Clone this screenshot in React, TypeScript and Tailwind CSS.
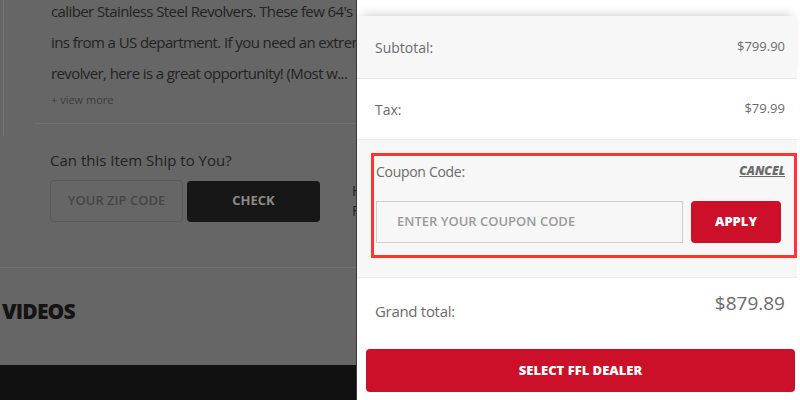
const font = { fontFamily: '"Open Sans", "Liberation Sans", sans-serif' };

function SummaryRow({
  label,
  value,
  className,
}: {
  label: string;
  value: string;
  className: string;
}) {
  return (
    <div
      className={`flex items-center justify-between pl-[18px] pr-[12px] ${className}`}
    >
      <span className="text-[14px] text-[#6b6b6b]">{label}</span>
      <span className="text-[13px] text-[#6b6b6b]">{value}</span>
    </div>
  );
}

export default function App() {
  return (
    <div className="flex h-[400px] w-[800px] overflow-hidden" style={font}>
      {/* dimmed product page */}
      <div className="flex w-[356px] shrink-0 flex-col overflow-hidden bg-[#666666]">
        <div className="ml-[3px] h-[136px] shrink-0 border-l border-[#767676] pl-[31px]">
          <div className="h-[128px] border-b border-[#707070] pl-[16px]">
            <div className="-mt-[4px] whitespace-nowrap text-[15px] leading-[31px] tracking-[-0.6px] text-[#232323]">
              <p>caliber Stainless Steel Revolvers. These few 64's are</p>
              <p>ins from a US department. If you need an extremely</p>
              <p>revolver, here is a great opportunity! (Most w...</p>
            </div>
            <p className="mt-[3px] text-[11px] text-[#3c3c3c]">+ view more</p>
          </div>
        </div>

        <div className="h-[132px] shrink-0 border-b border-[#707070] pl-[50px] pt-[14px]">
          <p className="text-[15px] leading-[20px] text-[#222222]">
            Can this Item Ship to You?
          </p>
          <div className="mt-[10px] flex items-center">
            <div className="flex h-[42px] w-[133px] shrink-0 items-center justify-center rounded-[4px] border border-[#5a5a5a] text-[13px] font-semibold text-[#454545]">
              YOUR ZIP CODE
            </div>
            <div className="ml-[4px] flex h-[41px] w-[133px] shrink-0 items-center justify-center rounded-[4px] bg-[#171717] text-[13px] font-bold text-[#8a8a8a]">
              CHECK
            </div>
            <div className="ml-[32px] flex shrink-0 flex-col text-[14px] leading-[20px] text-[#222222]">
              <span>H</span>
              <span>F</span>
            </div>
          </div>
        </div>

        <div className="h-[97px] shrink-0 pl-[2px] pt-[29px]">
          <h2 className="text-[21px] font-black leading-[29px] tracking-[-0.8px] text-[#141414]">
            VIDEOS
          </h2>
        </div>
        <div className="flex-1 bg-[#111111]" />
      </div>

      {/* order summary */}
      <div className="flex flex-1 flex-col border-l border-[#3a3a3a] bg-white pr-[3px]">
        <div className="h-[16px] shrink-0 bg-white" />
        <SummaryRow
          label="Subtotal:"
          value="$799.90"
          className="relative h-[63px] shrink-0 border-b border-[#e7e7e7] bg-[#f7f7f7] shadow-[0_-6px_10px_-5px_rgba(0,0,0,0.2)]"
        />
        <SummaryRow
          label="Tax:"
          value="$79.99"
          className="h-[61px] shrink-0 border-b border-[#ececec] bg-white"
        />

        <div className="h-[138px] shrink-0 border-b border-[#ececec] bg-[#f7f7f7] pl-[14px] pt-[13px]">
          <div className="h-[105px] border-[3px] border-[#ff3333] pl-[2px] pr-[9px] pt-[5px]">
            <div className="flex h-[20px] items-center justify-between">
              <span className="text-[14px] tracking-[-0.3px] text-[#6b6b6b]">
                Coupon Code:
              </span>
              <span className="text-[12px] font-extrabold italic text-[#6b6b6b] underline">
                CANCEL
              </span>
            </div>
            <div className="mt-[20px] flex items-center">
              <div className="flex h-[42px] w-[307px] items-center border border-[#cfcfcf] bg-[#f7f7f7] pl-[20px] text-[13px] font-semibold text-[#9a9a9a]">
                ENTER YOUR COUPON CODE
              </div>
              <button className="ml-[8px] flex h-[42px] w-[90px] items-center justify-center rounded-[4px] bg-[#cc1029] text-[13px] font-extrabold text-white">
                APPLY
              </button>
            </div>
          </div>
        </div>

        <div className="flex h-[57px] shrink-0 items-start justify-between bg-white pl-[18px] pr-[12px]">
          <span className="mt-[22px] text-[15px] tracking-[-0.3px] text-[#6b6b6b]">
            Grand total:
          </span>
          <span className="mt-[11px] text-[19px] text-[#6b6b6b]">$879.89</span>
        </div>
        <div className="bg-white pl-[9px] pr-[2px] pt-[14px]">
          <button className="flex h-[43px] w-full items-center justify-center rounded-[4px] bg-[#cc1029] text-[13px] font-extrabold text-white">
            SELECT FFL DEALER
          </button>
        </div>
      </div>
    </div>
  );
}
